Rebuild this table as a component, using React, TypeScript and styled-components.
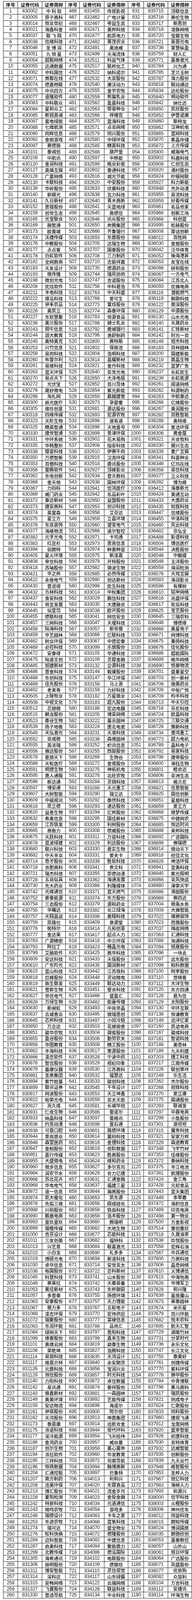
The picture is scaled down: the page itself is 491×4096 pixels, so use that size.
import React from "react";
import styled, { createGlobalStyle } from "styled-components";

const GlobalStyle = createGlobalStyle`
  html, body {
    margin: 0;
    padding: 0;
    background: #ffffff;
  }
`;

const groupA =
  "430002中 科 软,430005原子高科,430014恒业世纪,430021海鑫科金,430037联 飞 翔,430038信维科技,430046圣 博 润,430051九 恒 星,430054超毅网络,430055达通数据,430062中科国信,430071首都在线,430074德鑫物联,430075中讯四方,430077道隆软件,430083中科联众,430084星和众工,430085新锐英诚,430087富电绿能,430088七维航测,430090同辉信息,430092金刚游戏,430097赛德丽,430101泰诚信,430109中航讯,430120金润科技,430127英雄互娱,430128广厦网络,430130卡联科技,430139华岭股份,430140新眼光,430141久日新材,430152思银股份,430159创世生态,430165光宝联合,430169融智通,430173欧美城,430174沃捷传媒,430176中教股份,430177点点客,430178白虹软件,430182全网数商,430183天友设计,430193微传播,430198微创光电,430208优炫软件,430211丰电科技,430222璟泓科技,430225伊禾农品,430226奥凯立,430227东软慧聚,430236美兰股份,430243铜牛信息,430244颂大教育,430245奥特美克,430253兴竹信息,430258易同科技,430260布雷尔利,430261易维科技,430263蓝天环保,430270易点天下,430272光伏宝,430276晟矽微电,430298淘礼网,430300辰光医疗,430305维珍创意,430318四维传媒,430323天阶生物,430325精英智通,430330捷世智通,430331中环系统,430335华韩整形,430338银音科技,430350万德智新,430353百傲科技,430356雷腾软件,430362东电创新,430366金天地,430367力码科,430369威门药业,430372泰达新材,430373捷安高科,430374英富森,430375星立方,430376东亚装饰,430377海格物流,430382元亨光电,430383红豆杉,430394伯朗特,430405星火环境,430408帝信科技,430418苏轴股份,430421华之邦,430422永继电气,430430普滤得,430432方林科技,430437食安科技,430443将至发展,430445仙宜岱,430455德联科技,430457三网科技,430458陆海科技,430459华艺园林,430462树业环保,430469必控科技,430472安泰得,430475陆道文创,430485旭建新材,430486普金科技,430488东创科技,430489佳先股份,430492老来寿,430505上陵牧业,430508中视文化,430512芯朋微,430515麟龙股份,430523秦谷生物,430539扬子地板,430549天弘激光,430552亚成微,430555英派瑞,430556雅达股份,430578差旅天下,430588天松医疗,430591明德生物,430595唐人通服,430596新达通,430597博安通,430607大树智能,430609中磁视讯,430618凯立德,430620益善生物,430632希奥信息,430659江苏铁发,430665高衡力,430675天跃科技,430678蓝波绿建,430680联兴科技,430682中天羊业,430714奇才股份,430718合肥高科,430721瑞杰科技,430728五岳钻具,430730先大药业,430742光维通信,430752索泰能源,430754三态股份,430755华曦达,430757天翔昌运,430759凯路仕,830776帕特尔,830777金达莱,830783广源精密,830793阿拉丁,830799艾融软件,830809安达科技,830810广东羚光,830815蓝山科技,830818巨峰股份,830819致生联发,830821雪郎生物,830827世优电气,830828万绿生物,830830新昶虹,830837古城香业,830845芯邦科技,830850万企达,830851骏华农牧,830855盈谷股份,830858华图教育,830862丰海科技,830866凌志软件,830878智信股份,830879基康仪器,830881圣泉集团,830894紫竹桩基,830899联讯证券,830917网波股份,830922裕荣光电,830927兆久成,830931仁会生物,830933纳晶科技,830936约克动漫,830938可恩口腔,830944景尚旅业,830946森萱医药,830947金柏股份,830951嘉行传媒,830955大盛微电,830960微步信息,830964润农节水,830966苏北花卉,830968华电电气,830972道一信息,830974凯大催化,830978先临三维,830988兴和股份,830990鹏盾电商,830993壹玖壹玖,830999银橙传媒,831000吉芬设计,831011三友创美,831013兴艺景,831015小白龙,831019博硕光电,831030卓华信息,831036裕国股份,831045科慧科技,831049赛莱拉,831053美佳新材,831057多普泰,831063安泰股份,831067根力多,831068凌志环保,831072瑞聚股份,831083东润环能,831084绿网天下,831099维泰股份,831101奥维云网,831108荣乾坤,831114易销科技,831117维恩贝特,831126元鼎科技,831129领信股份,831140力阳科技,831142易讯通,831143焕鑫新材,831149奥美环境,831159安达物流,831161伊菲股份,831162天河股份,831173泰恩康,831175派诺科技,831177深冷能源,831186金鸿药业,831187创尔生物,831194派拉软件,831195三祥科技,831196恒扬数据,831204汇通控股,831207南方制药,831208洁昊环保,831213博汇股份,831228夏阳检测,831242特辰科技,831243晓鸣农牧,831248瑞德设计,831253东进农牧,831274瑞可达,831276松科快换,831284迈科智能,831287启奥科技,831299北教传媒,831305海希通讯,831306丽明股份,831311博安智能,831314深科达,831315安畅网络,831327飞翼股份,831330普适导航";

const groupB =
  "832455传视影视,832462广电计量,832467帝益生态,832471美邦科技,832477航凯电力,832482菁茂农业,832491奥迪威,832499天海流体,832511科益气体,832517联邦化工,832522纳科诺尔,832532大亚股份,832540康沃动力,832555金宇农牧,832559熊猫乳业,832562盈嘉科技,832563帮豪种业,832566梓橦宫,832570蓝海科技,832571点击网络,832579同兴股份,832580中绿环保,832585精英科技,832588葫芦堡,832597中移能,832599皓业彩瓷,832602泰通科技,832616城光节能,832620中安股份,832633伏泰科技,832638瓦力科技,832640青木高新,832641天蓝地绿,832645高德信,832646讯众股份,832650奔腾集团,832666齐鲁银行,832693东鼎股份,832705达瑞生物,832707国泰股份,832708三力制药,832710志能祥赢,832735德源药业,832744瑞风协同,832747吉诺股份,832756中科君浩,832763中天科盛,832768爱可生,832773寰烁股份,832774森泰环保,832783恒源食品,832786骑士乳业,832792鹿城银行,832796逸舒制药,832800赛特斯,832802保丽洁,832804浩明科技,832814昌耀新材,832821金丹科技,832840亚世光电,832850大泽电极,832852百川导体,832854紫光新能,832859晨越建管,832873孕婴童,832881源达股份,832893宏源农牧,832896道有道,832898天地壹号,832899景津环保,832902花木易购,832906指安科技,832910伊赛牛肉,832915汉尧环保,832918鼎讯股份,832927顶峰影业,832934普天数码,832938国林环保,832941信鸿医疗,832942名品彩叶,832950益盟股份,832953创识科技,832958艾芬达,832959立昌环境,832960望变电气,832966道尔智控,832971卡司通,832973思亮信息,832974鲜美种苗,832975新凌嘉,832978开特股份,832982锦波生物,832985必然传媒,832990创达新材,832996民生科技,833014中标集团,833029鹏信科技,833035大唐融合,833038欧开股份,833041网信安全,833047天堰科技,833057新世傲,833066亿联科技,833067中德宏泰,833099乐旅股份,833105华通科技,833109灵犀金融,833132企源科技,833144毅康股份,833147华江环保,833158马上游,833159力好科技,833182万星面业,833183超凡股份,833186宏远电器,833205博采网络,833222基业园林,833224唐北电瓷,833231天准科技,833238森维园林,833252帜讯信息,833255西部股份,833266生物谷,833272金塔股份,833275神拓机电,833278北旺农牧,833284灵鸽科技,833288天元重工,833290瑞立达,833292泰然科技,833293速达股份,833294亿邦股份,833295国佳新材,833300利树股份,833308德威股份,833311万容科技,833329利达股份,833330君实生物,833331爱夫卡,833339胜软科技,833341贵文科,833355崇德动漫,833362海通发展,833366利隆媒体,833371蓝天燃气,833374东方股份,833379源和药业,833382长江绿海,833398奥翔科技,833409泉源堂,833414凡拓创意,833417起点人力,833418中兰环保,833423穗晶光电,833425高华科技,833433天保股份,833435国润新材,833442江苏铁科,833448灵动微电,833449联达动力,833451璧合科技,833466盛盈汇,833482能量传播,833493中岳非晶,833495微瑞思创,833497小田冷链,833503花嫁丽舍,833504骐俊股份,833506勤劳农夫,833508精工股份,833517策源股份,833528宁波中药,833529视纪印象,833530江苏高科,833532福慧达,833533骏创科技,833545千年设计,833553天立坤鑫,833559亚太天能,833581长城华冠,833586雷诺尔,833597雷格讯,833598壹石通,833601路德环境,833614翼码科技,833616金锂科技,833619佰聆数据,833623胜高股份,833624维和药业,833627多尔克司,833629合力亿捷,833631汇通金融,833637福建三星,833644瀚高股份,833653凯东源,833656硕成硅化,833658铁血科技,833659浩丰股份,833660腾瑞明,833662大地生物,833677芯能科技,833682福特科,833684联嘉激光,833690礼多多,833694新道科技,833714安世亚太,833722巨科新材,833741山水股份,833742天秦装备,833743东邦御厨,833755扬德环境,833757天力锂能,833767五轮电子,833770宏伟供应,833777棠棣信息,833788品尚汇,833797思阳科技,833799嘉禾生物,833819颖泰生物,833827浩腾科技,833835天鸿设计,833840永安期货,833856宝润兴业,833857时光科技,833872卓信数据,833874泰祥股份,833881一森园林,833892艺能传媒,833896海诺尔,833900阿尔创,833913坤鼎集团,833914远航合金,833944现代环科,833954飞天经纬,833957威丝曼,833959美心翼申,833960华发教育,833972司南导航,833994翰博高新,833997巴鲁特,834013利和兴,834020东霖食品,834021流金岁月,834023金投金融,834034元道通信,834054游戏多,834063卡车之家,834068蓝氧科技,834070盛全物业,834072德隆股份,834082中建信息,834084聚能鼎力,834086德泓国际,834102电联股份,834109德御坊,834110灵信视觉,834117山东绿霸,834122云端网络,834126联益科技,834134中业科技";

const groupC =
  "835715顶联信息,835716赛伦生物,835717新思创,835718凌脉网络,835720宝藤生物,835721豪恩光电,835736掌慧纵盈,835759财人汇,835771嘉泰激光,835784兴为通,835785芝兰玉树,835787海力股份,835818联动通达,835834达伦股份,835840明动软件,835842纳仕达,835850凯欣股份,835852伊普诺康,835860斯特龙,835862汉神机电,835865蓝网科技,835870紫晶存储,835872上方传媒,835900威瀚电气,835902科盾科技,835908仁创生态,835920湘村股份,835924柠檬网联,835927科力新能,835948杰外动漫,835955易流科技,835959好看传媒,835961名品世家,835966创新工场,835968科创蓝,835995松赫股份,836008摩诘创新,836012百姓网,836030金居股份,836042泛华体育,836052珠海港昇,836053友宝在线,836066研和股份,836067一方电气,836084江苏北人,836093优雅电商,836116潜能燃气,836119朝歌科技,836122南深股份,836129中源股份,836130山水光电,836140天晟药业,836141汇锋新材,836142时光一百,836149旭杰科技,836183百林园林,836200国建新能,836219鼎晶生物,836232蓝梦广告,836237长虹民生,836239长虹能源,836261闻道网络,836262科源制药,836263中航泰达,836266亿维股份,836267美润股份,836282百胜智能,836288奥特维,836304复洁环保,836306黄金屋,836321天合牧科,836330振兴生态,836339麦广互娱,836341科荟种业,836346亿玛在线,836356易信科技,836377立义科技,836392博为峰,836412海泰新光,836424美通互动,836433大唐药业,836435知我科技,836447信维股份,836455中洛科技,836460风云科技,836482京弘全,836488影谱科技,836504博迅医疗,836544决胜股份,836546中触媒,836548玉洋股份,836559海润检测,836576天戏互娱,836583海润影业,836586有棵树,836610铠甲网络,836616兆盛环保,836617软岛科技,836625宝艺股份,836645三瑞农科,836646博德维,836668奥星电子,836671网博科技,836675秉扬科技,836676佳化股份,836686超能国际,836689皓华网络,836690悦泰物流,836701盛夏星空,836703创一新材,836706施美药业,836708中裕广恒,836709昀丰科技,836713中天引控,836716芬尼科技,836724欧晶科技,836725三联交通,836728豫新科技,836734唐鸿重工,836773超力电机,836789晶科电子,836792易家科技,836798捷帝股份,836800海钰生物,836801睦合达,836806亚洲生态,836813格兰尼,836821信恳智能,836825国信创新,836851星盾科技,836859爱立方,836868微梦传媒,836875中健网农,836885恒达时讯,836888来邦科技,836892广咨国际,836899佛瑞德,836914微动天下,836916经佳文化,836926神洁环保,836941宜美科技,836945紫光照明,836966亚风快运,836980津荣天宇,836986清园股份,836989赛四达,837004舜禹水务,837009大雅智能,837022雄狮装饰,837023芭薇股份,837037嗨皮网络,837063汇通科技,837088淘通科技,837094旭晟股份,837096一块去,837097远东股份,837099柏科数据,837100阿李股份,837110悠络客,837112大洋生物,837120东方四通,837128君为信,837129太阳股份,837130中环互联,837138恒谦教育,837149远洋亿家,837160凯诘电商,837167骏成科技,837181智诺科技,837188美奇林,837189九天利建,837203理工科技,837217江南传媒,837226联创草坪,837249乐生活,837262杰尔股份,837268冠锋科技,837270爱立康,837275国通股份,837293联诚发,837297中晨电商,837299小鱼股份,837301道坦坦,837315魔秀科技,837321安家万邦,837329森途教育,837348飞宇竹材,837353佳维股份,837372泰纳科技,837375丰江电池,837381航理股份,837424金三角,837428元初食品,837443蓝天集团,837449本草春,837472海豹信息,837489印克电商,837498第一物业,837500方金影视,837514童创童欣,837518久晟油茶,837538玖悦股份,837558宏辉石油,837567中兵通信,837600万高科技,837606晶奇网络,837610义博通信,837615中海怡高,837626华博军卫,837628和兴隆,837639星座魔山,837673莱泰园林,837674米乐星,837679百川环能,837682悦丰农科,837695航天汇智,837729湖南竹材,837731分享时代,837736永乐文化,837747长江文化,837755泰美好,837761创捷传媒,837770紫科环保,837778狮华股份,837784中青博联,837796黑马高科,837817瑞凯股份,837821则成电子,837824仁歌股份,837833同科股份,837860捷视飞通,837912龙席网络,837920盛本智能,837926初唐科技,837930亚特体育,837932达威智能,837935创新股份,837939九天云竹,837948格智股份,837953圣邦人力,837967锐亿科技,837983海峡人力,837993和源兴,838000信宇科技,838003火橙股份,838006神州优车,838012同益科技,838015朗知传媒,838024博润国旅,838035朗驰欣创,838053嘉泰数控,838057山外山,838061旭日环保,838064广远股份,838071风盛股份,838077优依购,838082众加利,838104万吉科技,838112安捷讯,838114环海生物";

type Entry = { no: number; code: string; name: string };

const parseGroup = (src: string, start: number): Entry[] =>
  src.split(",").map((item, i) => ({
    no: start + i,
    code: item.slice(0, 6),
    name: item.slice(6),
  }));

const columnA = parseGroup(groupA, 1);
const columnB = parseGroup(groupB, 466);
const columnC = parseGroup(groupC, 931);

const colWidths = [36.8, 62.1, 60.6, 36, 62.1, 61.7, 39.5, 62.1, 61.4];

const Page = styled.div`
  padding: 3px 0 0 8px;
  background: #ffffff;
`;

const Table = styled.table`
  border-collapse: collapse;
  table-layout: fixed;
  width: 483px;
  color: #111111;
`;

const HeadRow = styled.tr`
  height: 17.4px;
`;

const HeadCell = styled.th`
  border: 1px solid #111111;
  padding: 0;
  font-family: "Noto Sans CJK SC", "Noto Sans", sans-serif;
  font-size: 11.8px;
  font-weight: 700;
  line-height: 1;
  text-align: center;
  white-space: nowrap;
  overflow: hidden;
`;

const Row = styled.tr`
  height: 15.66px;
`;

const Cell = styled.td<{ $kind: "num" | "code" | "name" }>`
  border: 1px solid #1c1c1c;
  padding: 0;
  line-height: 1;
  text-align: center;
  white-space: nowrap;
  overflow: hidden;
  font-family: ${(p) =>
    p.$kind === "name"
      ? `"Noto Sans CJK SC", "Noto Sans", sans-serif`
      : `"Liberation Sans Narrow", "Liberation Sans", Arial, sans-serif`};
  font-size: ${(p) => (p.$kind === "name" ? "11.5px" : "12.6px")};
  font-weight: ${(p) => (p.$kind === "name" ? 500 : 400)};
  letter-spacing: ${(p) => (p.$kind === "name" ? "0" : "-0.4px")};
  color: ${(p) => (p.$kind === "name" ? "#111111" : "#262626")};
`;

const headers = ["序号", "证券代码", "证券简称"];

export default function App() {
  return (
    <Page>
      <GlobalStyle />
      <Table>
        <colgroup>
          {colWidths.map((w, i) => (
            <col key={i} style={{ width: `${w}px` }} />
          ))}
        </colgroup>
        <thead>
          <HeadRow>
            {[0, 1, 2].flatMap((g) =>
              headers.map((h) => <HeadCell key={`${g}-${h}`}>{h}</HeadCell>)
            )}
          </HeadRow>
        </thead>
        <tbody>
          {columnA.map((a, i) => (
            <Row key={a.no}>
              {[a, columnB[i], columnC[i]].map((e) => (
                <React.Fragment key={e.no}>
                  <Cell $kind="num">{e.no}</Cell>
                  <Cell $kind="code">{e.code}</Cell>
                  <Cell $kind="name">{e.name}</Cell>
                </React.Fragment>
              ))}
            </Row>
          ))}
        </tbody>
      </Table>
    </Page>
  );
}
